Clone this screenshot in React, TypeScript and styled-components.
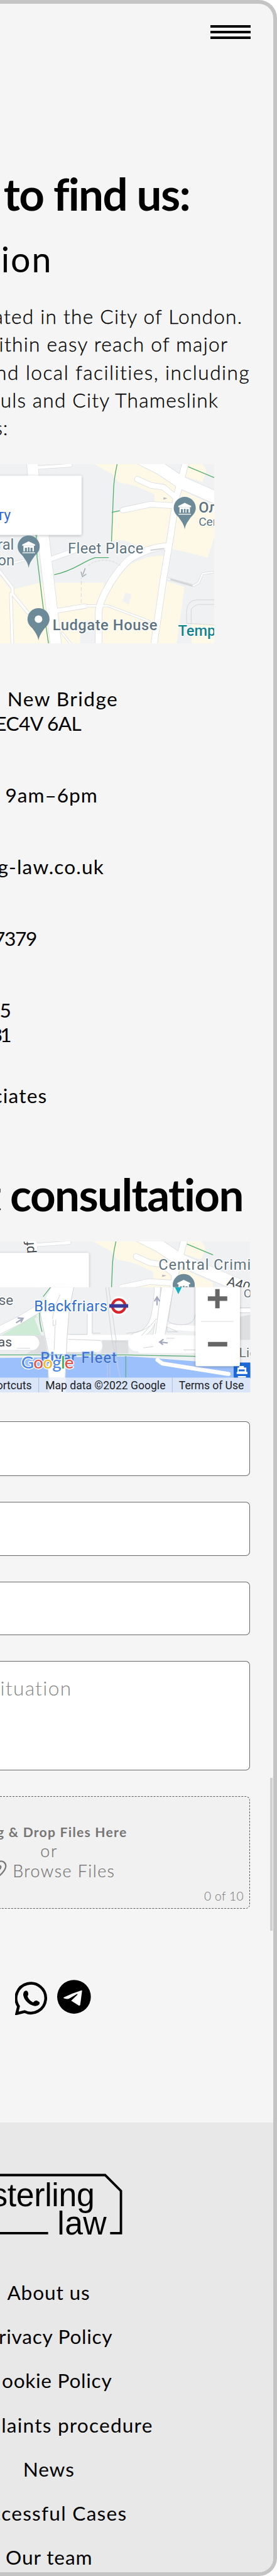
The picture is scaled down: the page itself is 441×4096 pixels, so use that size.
import React from 'react';
import styled, { createGlobalStyle } from 'styled-components';

const SCALE = 0.958;
const px = (n: number) => `${+(n * SCALE).toFixed(2)}px`;

const GlobalStyle = createGlobalStyle`
  *, *::before, *::after { box-sizing: border-box; }
  html, body { margin: 0; padding: 0; background: #fff; }
  svg { display: block; }
`;

const Frame = styled.div`
  position: relative;
  display: flex;
  flex-direction: column;
  width: 441px;
  height: 4096px;
  overflow: hidden;
  border: 6px solid #c4c4c4;
  border-left: 0;
  border-radius: 0 ${px(30)} ${px(30)} 0;
  background: #f5f5f5;
  color: #000;
  font-family: Lato, "Liberation Sans", sans-serif;
  > * { flex-shrink: 0; }
`;

const Header = styled.header`
  display: flex;
  justify-content: flex-end;
  height: ${px(94)};
  padding: ${px(36)} ${px(38)} 0 0;
`;

const Burger = styled.div`
  display: flex;
  flex-direction: column;
  justify-content: space-between;
  width: ${px(66)};
  height: ${px(23)};
`;

const BurgerBar = styled.span<{ $h: number }>`
  height: ${p => px(p.$h)};
  background: #000;
`;

/* Every line ends at a given right edge; what is longer runs off the left. */
const Line = styled.span<{ $right: number; $ls: number }>`
  display: flex;
  justify-content: flex-end;
  width: ${p => px(p.$right + 1 + p.$ls)};
  letter-spacing: ${p => px(p.$ls)};
  white-space: pre;
`;

const Title = styled.h1<{ $top: number }>`
  margin: ${p => px(p.$top)} 0 0;
  font-size: ${px(74)};
  line-height: ${px(90)};
  font-weight: 700;
`;

const Subtitle = styled.h2`
  margin: ${px(28.6)} 0 0;
  font-size: ${px(58)};
  line-height: ${px(70)};
  font-weight: 400;
`;

const Paragraph = styled.p`
  margin: ${px(37.1)} 0 0;
  font-size: ${px(33)};
  line-height: ${px(46.2)};
  font-weight: 300;
  -webkit-text-stroke: 0.35px #000;
`;

const MapFrame = styled.figure<{ $top: number; $w: number; $h: number }>`
  margin: ${p => px(p.$top)} 0 0;
  width: ${p => px(p.$w)};
  height: ${p => px(p.$h)};
  overflow: hidden;
  svg { width: 100%; height: 100%; }
`;

const ContactList = styled.address`
  display: flex;
  flex-direction: column;
  gap: ${px(77.9)};
  margin-top: ${px(71.7)};
  font-style: normal;
  font-size: ${px(33)};
  line-height: ${px(41)};
  font-weight: 400;
`;

const Contact = styled.div<{ $pull?: number }>`
  margin-top: -${p => px(p.$pull ?? 0)};
`;

const Form = styled.form`
  display: flex;
  flex-direction: column;
  gap: ${px(42.8)};
  width: ${px(415.7)};
  margin-top: ${px(48.3)};
`;

const Field = styled.div<{ $h: number }>`
  height: ${p => px(p.$h)};
  border: 1px solid #686868;
  border-left: 0;
  border-radius: 0 ${px(7)} ${px(7)} 0;
  background: #fff;
`;

const Message = styled(Field)`
  padding-top: ${px(23.5)};
  font-size: ${px(33)};
  line-height: ${px(41)};
  font-weight: 300;
  color: #858585;
`;

const DropZone = styled.div`
  position: relative;
  height: ${px(186.4)};
  padding-top: ${px(45)};
  border: 1px dashed #5c5c5c;
  border-left: 0;
  border-radius: 0 ${px(7)} ${px(7)} 0;
  background: #f1f1f1;
  color: #757575;
`;

const DropTitle = styled.div`
  font-size: ${px(22)};
  line-height: ${px(28)};
  font-weight: 700;
`;

const DropText = styled.div`
  font-size: ${px(28)};
  line-height: ${px(33.5)};
  font-weight: 300;
  -webkit-text-stroke: 0.2px #757575;
`;

const BrowseRow = styled(DropText)`
  display: flex;
  > svg { position: absolute; left: 0; top: ${px(100)}; width: ${px(12)}; height: ${px(34)}; }
`;

const Counter = styled.div`
  padding-top: ${px(12.5)};
  font-size: ${px(20)};
  line-height: ${px(26)};
  font-weight: 300;
`;

const Socials = styled.div`
  display: flex;
  align-items: flex-start;
  gap: ${px(15)};
  height: ${px(60)};
  margin-top: ${px(117.6)};
  padding-left: ${px(25.5)};
`;

const WhatsApp = styled.svg`
  width: ${px(54.7)};
  height: ${px(56)};
  margin-top: ${px(3.3)};
`;

const Telegram = styled.svg`
  width: ${px(56)};
  height: ${px(56.5)};
`;

const Footer = styled.footer`
  flex: 1 0 auto;
  margin-top: ${px(177.8)};
  padding-top: ${px(83)};
  background: #e8e8e8;
`;

const Logo = styled.svg`
  width: ${px(206.67)};
  height: ${px(106.67)};
`;

const Links = styled.nav`
  display: flex;
  flex-direction: column;
  margin-top: ${px(54.8)};
  font-size: ${px(33)};
  line-height: ${px(73.4)};
  font-weight: 400;
`;

const ScrollThumb = styled.div`
  position: absolute;
  right: ${px(1)};
  top: ${px(2944.7)};
  width: ${px(4.5)};
  height: ${px(253.3)};
  background: #d0d0d0;
`;

const Pin = ({ x, y, dot }: { x: number; y: number; dot?: boolean }) => (
  <g transform={`translate(${x} ${y})`}>
    <path d="M0 106 C-4 82 -12 72 -30 46 C-46 32 -55 18 -55 0 A55 55 0 0 1 55 0 C55 18 46 32 30 46 C12 72 4 82 0 106Z" fill="#6d8a99" />
    {dot ? <circle r="19" fill="#fff" /> : (
      <g fill="#fff">
        <path d="M-32 -10 L0 -26 L32 -10 V-4 H-32Z" />
        <path d="M-26 -4 h52 v28 h-7 v-18 h-10 v18 h-5 v-20 h-8 v20 h-5 v-18 h-10 v18 h-7z" />
        <rect x="-31" y="29" width="62" height="4" />
      </g>
    )}
  </g>
);

const roads: [string, number][] = [
  ['M160 60 L167 160 L215 440 L245 700 L280 1000', 54],
  ['M700 62 L800 112 L905 182 L1080 258 L1300 350', 60],
  ['M928 70 L900 180 L880 250 L850 450 L815 660 L766 1000', 30],
  ['M840 498 Q735 505 650 560 Q600 600 545 690 Q492 780 492 830 V1000', 32],
  ['M612 319 L750 290 L870 297', 26],
  ['M685 165 L750 195 L815 205 L880 258', 26],
  ['M245 565 L385 515', 22],
  ['M290 818 L425 796', 20],
  ['M425 795 L540 795 L745 872', 8],
  ['M-10 612 L62 705 L62 735 L140 830', 12],
  ['M54 735 L62 1000', 12],
  ['M185 107 L352 96', 14],
  ['M835 660 L965 695 L990 680 L1010 635 L1060 628', 7],
  ['M70 580 L120 568', 8],
  ['M310 930 L358 990', 8],
];

const CityBlocks = () => (
  <g>
    <g fill="#fef8e7">
      <path d="M470 90 H690 L910 190 L880 260 L865 300 H770 V240 L680 200 L640 190 L590 180 L560 140Z" />
      <path d="M895 215 L1068 295 V455 L1035 555 L940 530 L835 508Z" />
      <path d="M558 330 L610 325 L750 295 L858 300 L825 490 L710 505 L620 470 H556Z" />
      <path d="M75 710 L200 680 L520 680 L480 990 H-5 V640 L50 710Z" />
      <path d="M820 545 L765 990 H505 V800 Q560 680 640 595 Q720 545 820 545Z" />
      <path d="M825 670 L920 700 L880 990 H780Z" />
      <path d="M955 885 H1068 V990 H955Z" />
      <path d="M940 90 H1010 L1030 120 L1010 180 L920 150Z" />
    </g>
    <path d="M400 870 H480 V990 H400Z M612 770 L625 728 L655 738 L642 790Z" fill="#eff1f3" />
    <g fill="none" stroke="#dcdde0" strokeLinejoin="round" strokeLinecap="round">
      {roads.map(([d, w]) => <path key={d} d={d} strokeWidth={w + 5} />)}
    </g>
    <g fill="none" stroke="#fff" strokeLinejoin="round" strokeLinecap="round">
      {roads.map(([d, w]) => <path key={d} d={d} strokeWidth={w} />)}
    </g>
    <g fill="none" stroke="#d3d5d7" strokeWidth="3">
      <path d="M930 882 V820 Q935 765 985 765 H1070 M953 882 V815 Q965 788 1000 788 H1070 M930 882 L1068 890" />
      <path d="M405 780 V655" strokeDasharray="18 12" />
      <path d="M440 595 Q480 562 545 570 Q570 575 600 595" strokeDasharray="12 6" />
      <path d="M750 518 L820 510" strokeWidth="7" />
      <path d="M850 662 L960 695" strokeWidth="9" />
    </g>
    <path d="M425 608 L413 640 M404 625 L411 650 L430 637" fill="none" stroke="#a9aeb5" strokeWidth="5" />
    <path d="M815 255 L835 260 L815 267Z" fill="#b5b8bb" />
    <g fill="none" stroke="#4fae6a" strokeWidth="4">
      <path d="M584 90 Q568 160 566 220 L556 475 M557 330 L597 322" />
      <path d="M938 103 L1068 157" />
      <path d="M270 640 Q330 628 400 590 Q450 562 475 555 H542" />
      <path d="M180 440 L185 555 L215 800 L243 990" />
    </g>
  </g>
);

const LocationMap = () => (
  <svg viewBox="0 90 1068 893" preserveAspectRatio="none" fontFamily='Roboto, "Liberation Sans", sans-serif'>
    <defs>
      <filter id="cardShadow" x="-10%" y="-10%" width="120%" height="125%">
        <feDropShadow dx="0" dy="3" stdDeviation="6" floodColor="#000" floodOpacity=".28" />
      </filter>
    </defs>
    <rect y="90" width="1068" height="893" fill="#eff1f3" />
    <CityBlocks />
    <rect x="-40" y="148" width="447" height="294" rx="6" fill="#fff" filter="url(#cardShadow)" />
    <text x="54" y="370" textAnchor="end" fontSize="72" fill="#3367d6">ту</text>
    <Pin x={143} y={500} />
    <Pin x={921} y={308} />
    <Pin x={192} y={861} dot />
    <g fill="#5d7380" stroke="#fff" strokeWidth="8" strokeLinejoin="round" paintOrder="stroke" fontSize="74">
      <text x="70" y="515" textAnchor="end">ral</text>
      <text x="72" y="593" textAnchor="end">on</text>
      <text x="338" y="535" textLength="377">Fleet Place</text>
      <text x="262" y="915" textLength="522" fontWeight="500">Ludgate House</text>
      <text x="990" y="332" fontWeight="500">Ол</text>
      <text x="990" y="397" fontSize="60">Сеn</text>
      <text x="888" y="943" fill="#12828c" fontWeight="500">Temp</text>
    </g>
  </svg>
);

const ConsultationMap = () => (
  <svg viewBox="0 540 1248 752" preserveAspectRatio="none" fontFamily='Roboto, "Liberation Sans", sans-serif'>
    <defs>
      <clipPath id="upper"><rect y="540" width="1248" height="228" /></clipPath>
      <clipPath id="lower"><rect y="768" width="1248" height="524" /></clipPath>
      <filter id="panelShadow" x="-10%" y="-10%" width="120%" height="120%">
        <feDropShadow dx="0" dy="3" stdDeviation="7" floodColor="#000" floodOpacity=".28" />
      </filter>
    </defs>
    <rect y="540" width="1248" height="752" fill="#eff1f3" />
    <g clipPath="url(#upper)">
      <g transform="translate(-6 450)"><CityBlocks /></g>
      <g fill="#454b50" stroke="#fff" strokeWidth="8" paintOrder="stroke" fontSize="66">
        <text transform="translate(171 598) rotate(-93)">pf</text>
      </g>
      <rect x="-40" y="597" width="483" height="240" rx="6" fill="#fff" filter="url(#panelShadow)" />
      <Pin x={916} y={757} />
      <g stroke="#fff" strokeWidth="8" paintOrder="stroke" fontSize="74">
        <text x="790" y="680" fill="#5d7380" textLength="460">Central Crimi</text>
        <text transform="translate(1127 757) rotate(17)" fill="#454b50" fontSize="66">A40</text>
      </g>
    </g>
    <g clipPath="url(#lower)">
      <rect y="768" width="1248" height="524" fill="#eff1f3" />
      <path d="M5 1008 L180 905 L212 1008Z" fill="#cdebd5" />
      <path d="M0 1070 H1248 V1120 H0Z" fill="#eceef0" />
      <path d="M150 1008 H220 L240 1100 H130 Q185 1070 185 1050 Q185 1025 150 1008Z M505 1030 H640 V1098 H500 Q520 1060 505 1030Z M1195 915 L1248 905 V1030 H1195Z M330 1060 L480 1090 V1100 H330Z" fill="#dedfe1" />
      <path d="M0 1120 L640 1112 L780 1122 L1248 1158 V1225 H0Z" fill="#9cc0fb" />
      <g fill="none" stroke="#d5d7da" strokeLinecap="round" strokeLinejoin="round">
        <path d="M-10 985 L100 930 L200 870 L250 830 L305 760" strokeWidth="41" />
        <path d="M785 760 Q780 900 755 950 Q730 1000 670 1012" strokeWidth="33" />
        <path d="M838 750 L790 1020" strokeWidth="61" />
        <path d="M-10 1045 H160" strokeWidth="77" />
      </g>
      <g fill="none" stroke="#fff" strokeLinecap="round" strokeLinejoin="round">
        <path d="M-10 985 L100 930 L200 870 L250 830 L305 760" strokeWidth="36" />
        <path d="M180 925 L210 1000" strokeWidth="14" stroke="#eff1f3" />
        <path d="M785 760 Q780 900 755 950 Q730 1000 670 1012" strokeWidth="28" />
        <path d="M838 750 L790 1020" strokeWidth="56" />
        <path d="M447 890 V1010" strokeWidth="24" />
        <path d="M-10 1045 H160" strokeWidth="72" />
        <path d="M335 1018 L660 1018" strokeWidth="26" />
        <path d="M335 1060 H480" strokeWidth="60" />
        <path d="M680 1045 L800 1045 L980 1050" strokeWidth="82" />
        <path d="M700 1085 L1190 1085" strokeWidth="22" />
        <path d="M850 965 L990 975" strokeWidth="28" />
        <path d="M1190 884 H1260" strokeWidth="20" />
        <path d="M785 1130 L810 1148 L1140 1200" strokeWidth="20" />
      </g>
      <path d="M258 768 H368 L345 880 L335 1000 L325 1225 H243 L235 1080 L205 900 L215 850Z" fill="#fff" />
      <g fill="none" stroke="#cfd2d5" strokeWidth="3">
        <path d="M205 830 L200 900 L240 1085 V1225 M368 768 L345 880 L335 1010 L325 1218" />
        <path d="M300 805 L270 870 L262 925 M265 930 V960 L278 955 V930 M275 960 L270 1080" />
        <path d="M527 768 L560 1040 M542 768 L580 1040 M555 1040 H630" />
        <path d="M460 895 V997 H500 M435 900 V1003 H340 M340 1027 L500 1033 M630 998 Q720 990 745 960 M805 768 L775 1000 M865 768 L838 935 Q850 955 910 955 Q970 955 975 900" />
        <path d="M832 965 V990 H885Z M780 925 L705 1010 M85 1072 H150 M715 1070 L765 1063 M830 1022 H870 M915 1080 H975" />
        <path d="M1195 870 H1248 M1195 895 H1248" />
      </g>
      <path d="M560 1040 L600 1220 M575 1040 L590 1180 M548 1150 V1220 M535 1150 V1220" fill="none" stroke="#c9ced6" strokeWidth="3" opacity=".8" />
      <path d="M0 1105 H630 L975 1112 M627 1110 V1218 M252 768 L215 815 M197 895 Q195 940 210 990" fill="none" stroke="#5cae78" strokeWidth="4" />
      <g fill="none" stroke="#a3a9bd" strokeWidth="7">
        <path d="M80 945 L112 925 M88 921 L115 923 L104 943" />
        <path d="M783 858 V822 M770 838 L783 817 L796 838" />
        <path d="M836 1045 L800 1041 M815 1027 L796 1041 L813 1054" />
      </g>
      <path d="M872 768 H906 L889 802Z" fill="#12b0bf" />
      <g stroke="#fff" strokeWidth="8" strokeLinejoin="round" paintOrder="stroke" fontSize="70">
        <text x="66" y="857" textAnchor="end" fill="#5d6a73">se</text>
        <text x="60" y="1063" textAnchor="end" fill="#4c5156" fontSize="66">as</text>
        <text x="170" y="887" fill="#2f6fce" fontSize="74" textLength="365">Blackfriars</text>
        <text x="202" y="1145" fill="#3a6cc8" stroke="#a9c8fb" fontSize="74" textLength="380">River Fleet</text>
        <text x="1214" y="818" fill="#6b7680" fontSize="60">O</text>
        <text x="1192" y="1115" fill="#6a6d70" fontSize="66">Lie</text>
      </g>
      <circle cx="592" cy="861" r="47" fill="#fff" />
      <circle cx="592" cy="861" r="32" fill="none" stroke="#d8232a" strokeWidth="13" />
      <rect x="545" y="852" width="94" height="18" fill="#3a3796" />
      <rect x="1165" y="1143" width="90" height="78" rx="10" fill="#1a67d8" />
      <path d="M1192 1160 h24 v8 h12 v22 h6 v10 h-54 v-10 h4 v-22 h8z M1186 1210 h40 v8 h-40z" fill="#fff" />
      <path d="M1190 1177 h30 v10 h-30z" fill="#1a67d8" />
      <text x="106" y="1172" fontFamily="Lato, sans-serif" fontSize="87" fontWeight="500" textLength="262" stroke="#fff" strokeWidth="9" strokeLinejoin="round" paintOrder="stroke">
        <tspan fill="#4a86e8">G</tspan><tspan fill="#e2504a">o</tspan><tspan fill="#f2b92c">o</tspan><tspan fill="#4a86e8">g</tspan><tspan fill="#3fa957">l</tspan><tspan fill="#e2504a">e</tspan>
      </text>
      <rect y="1218" width="1248" height="74" fill="#dae6f8" />
      <path d="M245 1218 h82 v74 h-82z" fill="#edf2fa" />
      <path d="M193 1218 V1292 M859 1218 V1292" stroke="#a9bddc" strokeWidth="3" />
      <g fontSize="55" fill="#202124">
        <text x="158" y="1275" textAnchor="end">ortcuts</text>
        <text x="226" y="1275" textLength="599">Map data ©2022 Google</text>
        <text x="892" y="1275" textLength="324">Terms of Use</text>
      </g>
      <rect x="975" y="700" width="221" height="461" rx="7" fill="#fff" filter="url(#panelShadow)" />
      <path d="M1036 813 H1073 V777 H1095 V813 H1133 V836 H1095 V873 H1073 V836 H1036Z M1037 1040 H1133 V1063 H1037Z" fill="#666" />
      <path d="M1003 938 H1164" stroke="#e3e3e3" strokeWidth="4" />
    </g>
  </svg>
);

export default function App() {
  return (
    <>
      <GlobalStyle />
      <Frame>
        <Header>
          <Burger>
            <BurgerBar $h={3.5} />
            <BurgerBar $h={4.5} />
            <BurgerBar $h={4.5} />
          </Burger>
        </Header>

        <Title $top={176.2}><Line $right={316} $ls={-1.7}>to find us:</Line></Title>
        <Subtitle><Line $right={84} $ls={2}>tion</Line></Subtitle>
        <Paragraph>
          <Line $right={401} $ls={1.3}>ated in the City of London.</Line>
          <Line $right={377} $ls={1.35}>ithin easy reach of major</Line>
          <Line $right={413} $ls={1.54}>nd local facilities, including</Line>
          <Line $right={361} $ls={1.26}>uls and City Thameslink</Line>
          <Line $right={12} $ls={1}>s:</Line>
        </Paragraph>

        <MapFrame $top={37.1} $w={356} $h={298}><LocationMap /></MapFrame>

        <ContactList>
          <Contact>
            <Line $right={194} $ls={1.5}>, New Bridge</Line>
            <Line $right={134.5} $ls={-0.6}>EC4V 6AL</Line>
          </Contact>
          <Contact><Line $right={160.5} $ls={1}>9am–6pm</Line></Contact>
          <Contact><Line $right={171} $ls={1.2}>g-law.co.uk</Line></Contact>
          <Contact><Line $right={61} $ls={-1.4}>7379</Line></Contact>
          <Contact>
            <Line $right={17.5} $ls={0}>5</Line>
            <Line $right={18.5} $ls={-4}>31</Line>
          </Contact>
          <Contact $pull={18.1}><Line $right={76.5} $ls={1.25}>ciates</Line></Contact>
        </ContactList>

        <Title $top={97.8}><Line $right={404.5} $ls={-1.65}>t consultation</Line></Title>

        <MapFrame $top={33} $w={416} $h={250.7}><ConsultationMap /></MapFrame>

        <Form>
          <Field $h={91} />
          <Field $h={89.3} />
          <Field $h={89.3} />
          <Message $h={181.7}><Line $right={117} $ls={1.4}>ituation</Line></Message>
          <DropZone>
            <DropTitle><Line $right={209} $ls={1.33}>g &amp; Drop Files Here</Line></DropTitle>
            <DropText><Line $right={93.5} $ls={1.88}>or</Line></DropText>
            <BrowseRow>
              <svg viewBox="0 0 36 102" fill="none" stroke="#777" strokeWidth="7">
                <path d="M-4 22 C14 16 30 28 29 46 C28 62 14 78 -4 94" />
                <path d="M-4 42 C6 42 8 52 -4 62" />
              </svg>
              <Line $right={189} $ls={1.55}>Browse Files</Line>
            </BrowseRow>
            <Counter><Line $right={403.5} $ls={0.36}>0 of 10</Line></Counter>
          </DropZone>
        </Form>

        <Socials>
          <WhatsApp viewBox="77 266 164 168">
            <path d="M85 425 L94 389 A74 74 0 1 1 124 415 Z" fill="none" stroke="#000" strokeWidth="14" />
            <path d="M120 319 C124 311 132 309 138 313 C144 321 145 331 139 338 C142 350 154 363 167 369 C174 362 180 358 187 361 L197 367 C202 371 199 379 193 383 C184 389 171 388 160 383 C140 374 123 355 119 338 C117 331 117 325 120 319Z" fill="#000" />
          </WhatsApp>
          <Telegram viewBox="284 256 168 169">
            <circle cx="368" cy="340.5" r="84" fill="#000" />
            <path d="M315 344 Q360 322 406 308 Q408 308 408 312 L399 380 Q397 386 391 383 L354 360 L385 330 Q388 326 383 326 L343 350 Q335 353 318 348Z" fill="#fff" />
          </Telegram>
        </Socials>

        <Footer>
          <Logo viewBox="0 140 620 320">
            <g fill="none" stroke="#000" strokeWidth="12">
              <path d="M-10 151 H524 L603 230 V440 H549" />
              <path d="M-10 440 H240" />
            </g>
            <g fontFamily='"Liberation Sans", Arial, sans-serif' fontSize="162">
              <text x="471" y="306" textAnchor="end" letterSpacing="-1">sterling</text>
              <text x="286" y="446" textLength="245">law</text>
            </g>
          </Logo>
          <Links>
            <Line $right={148} $ls={0.9}>About us</Line>
            <Line $right={185.5} $ls={0.75}>rivacy Policy</Line>
            <Line $right={184.5} $ls={0.75}>ookie Policy</Line>
            <Line $right={252} $ls={1.25}>plaints procedure</Line>
            <Line $right={122} $ls={0.9}>News</Line>
            <Line $right={209} $ls={1.3}>ccessful Cases</Line>
            <Line $right={152} $ls={0.95}>Our team</Line>
          </Links>
        </Footer>
        <ScrollThumb />
      </Frame>
    </>
  );
}
